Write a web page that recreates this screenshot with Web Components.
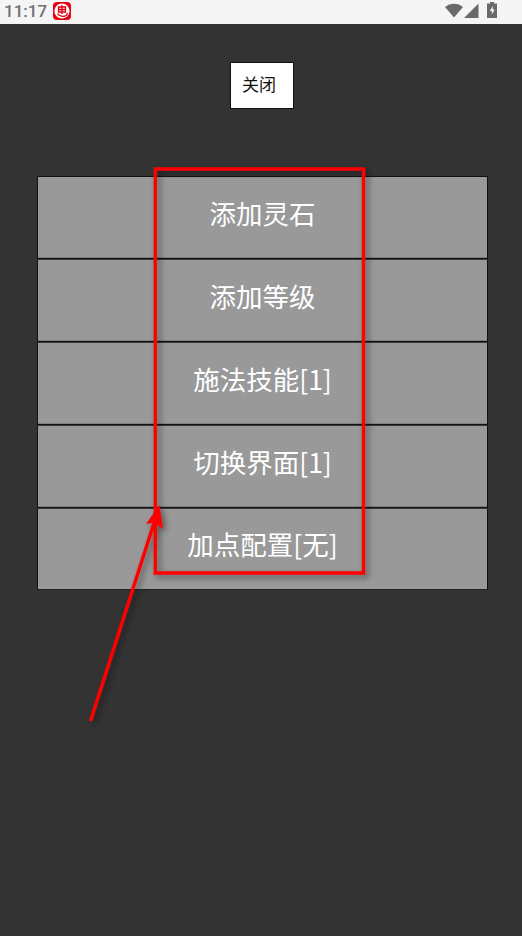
<!DOCTYPE html>
<html>
<head>
<meta charset="utf-8">
<style>
  html, body { margin: 0; padding: 0; background: #333; }
  body { width: 522px; height: 936px; position: relative; overflow: hidden; font-family: Roboto, "Noto Sans CJK SC", sans-serif; }
</style>
</head>
<body>
<status-bar></status-bar>
<close-button>关闭</close-button>
<menu-list>
  <menu-row>添加灵石</menu-row>
  <menu-row>添加等级</menu-row>
  <menu-row>施法技能[1]</menu-row>
  <menu-row>切换界面[1]</menu-row>
  <menu-row>加点配置[无]</menu-row>
</menu-list>
<red-markup></red-markup>
<script>
class StatusBar extends HTMLElement {
  constructor() {
    super();
    this.attachShadow({ mode: 'open' });
    this.shadowRoot.innerHTML = `
      <style>
        :host { display: flex; align-items: center; box-sizing: border-box; height: 24px; background: #f5f5f5; color: #707070; font: 500 17px/22px Roboto, sans-serif; padding: 0 25px 0 4px; }
        .app { margin-left: 6px; width: 18px; height: 18px; margin-top: -2px; }
        .right { margin-left: auto; display: flex; align-items: center; margin-top: -4px; }
        svg { display: block; }
      </style>
      <span style="margin-top:-2px">11:17</span>
      <svg class="app" viewBox="0 0 18 18">
        <rect x="0" y="0" width="18" height="18" rx="4" fill="#e60012"/>
        <circle cx="9" cy="9" r="7.600" fill="#fff"/>
        <path d="M5.500 5h7v5h-7zM5.500 7.500h7M9 3v9M4.500 11.500c1.500 3 6 3.500 9 2l1 -2.500" fill="none" stroke="#e60012" stroke-width="1.300"/>
      </svg>
      <div class="right">
        <svg width="18" height="16" viewBox="0 0 18 16"><path d="M0 5C5 0.500 13 0.500 18 5L9 15.500Z" fill="#6a6a6a"/></svg>
        <svg width="15" height="15" viewBox="0 0 15 15" style="margin-left:1px"><path d="M14.500 0.500V15H0Z" fill="#6a6a6a"/></svg>
        <svg width="10" height="16" viewBox="0 0 10 16" style="margin-left:8px"><path d="M3 0h4v1.500h3v14.500h-10v-14.500h3Z" fill="#6a6a6a"/><path d="M5.800 4L2.800 9h2v3.500l3 -5h-2Z" fill="#f5f5f5"/></svg>
      </div>`;
  }
}
customElements.define('status-bar', StatusBar);

class CloseButton extends HTMLElement {
  constructor() {
    super();
    this.attachShadow({ mode: 'open' });
    this.shadowRoot.innerHTML = `
      <style>
        :host { display: flex; align-items: center; box-sizing: border-box; width: 64px; height: 47px; margin: 38px 0 0 230px; padding: 0 0 4px 11px; background: #fff; border: 1px solid #111; color: #111; font: 17px/24px "Noto Sans CJK SC", sans-serif; }
      </style>
      <slot></slot>`;
  }
}
customElements.define('close-button', CloseButton);

class MenuList extends HTMLElement {
  constructor() {
    super();
    this.attachShadow({ mode: 'open' });
    this.shadowRoot.innerHTML = `
      <style>
        :host { display: flex; flex-direction: column; width: 451px; margin: 67px 0 0 37px; }
      </style>
      <slot></slot>`;
  }
}
customElements.define('menu-list', MenuList);

class MenuRow extends HTMLElement {
  constructor() {
    super();
    this.attachShadow({ mode: 'open' });
    this.shadowRoot.innerHTML = `
      <style>
        :host { display: flex; align-items: center; justify-content: center; box-sizing: border-box; height: 83px; background: #999; border: 1px solid #111; border-bottom: 0; box-shadow: inset 0 -1px #111, inset 0 -2px #808080; color: #fff; font: 26.500px/34px "Noto Sans CJK SC", sans-serif; padding-bottom: 10px; }
        :host(:first-child) { border-top-color: #111; }
        :host(:not(:first-child)) { border-top-color: #3a3a3a; }
        :host(:last-child) { height: 82px; border-bottom: 1px solid #222; box-shadow: none; }
      </style>
      <slot></slot>`;
  }
}
customElements.define('menu-row', MenuRow);

// annotation drawn over the screenshot
class RedMarkup extends HTMLElement {
  constructor() {
    super();
    this.attachShadow({ mode: 'open' });
    this.shadowRoot.innerHTML = `
      <style>
        :host { position: absolute; left: 0; top: 0; width: 522px; height: 936px; pointer-events: none; }
        svg { display: block; }
      </style>
      <svg width="522" height="936" viewBox="0 0 522 936">
        <defs>
          <filter id="sh" x="-20%" y="-20%" width="140%" height="140%">
            <feDropShadow dx="3" dy="3" stdDeviation="3" flood-color="#000" flood-opacity="0.45"/>
          </filter>
        </defs>
        <g filter="url(#sh)">
          <rect x="155.300" y="169" width="208.200" height="404" fill="none" stroke="#f00" stroke-width="3.500"/>
          <path d="M90.500 721L155 520" stroke="#f00" stroke-width="3.500" fill="none"/>
          <path d="M159.500 505L163 529L154 522.500L146 524Z" fill="#f00"/>
        </g>
      </svg>`;
  }
}
customElements.define('red-markup', RedMarkup);
</script>
</body>
</html>
